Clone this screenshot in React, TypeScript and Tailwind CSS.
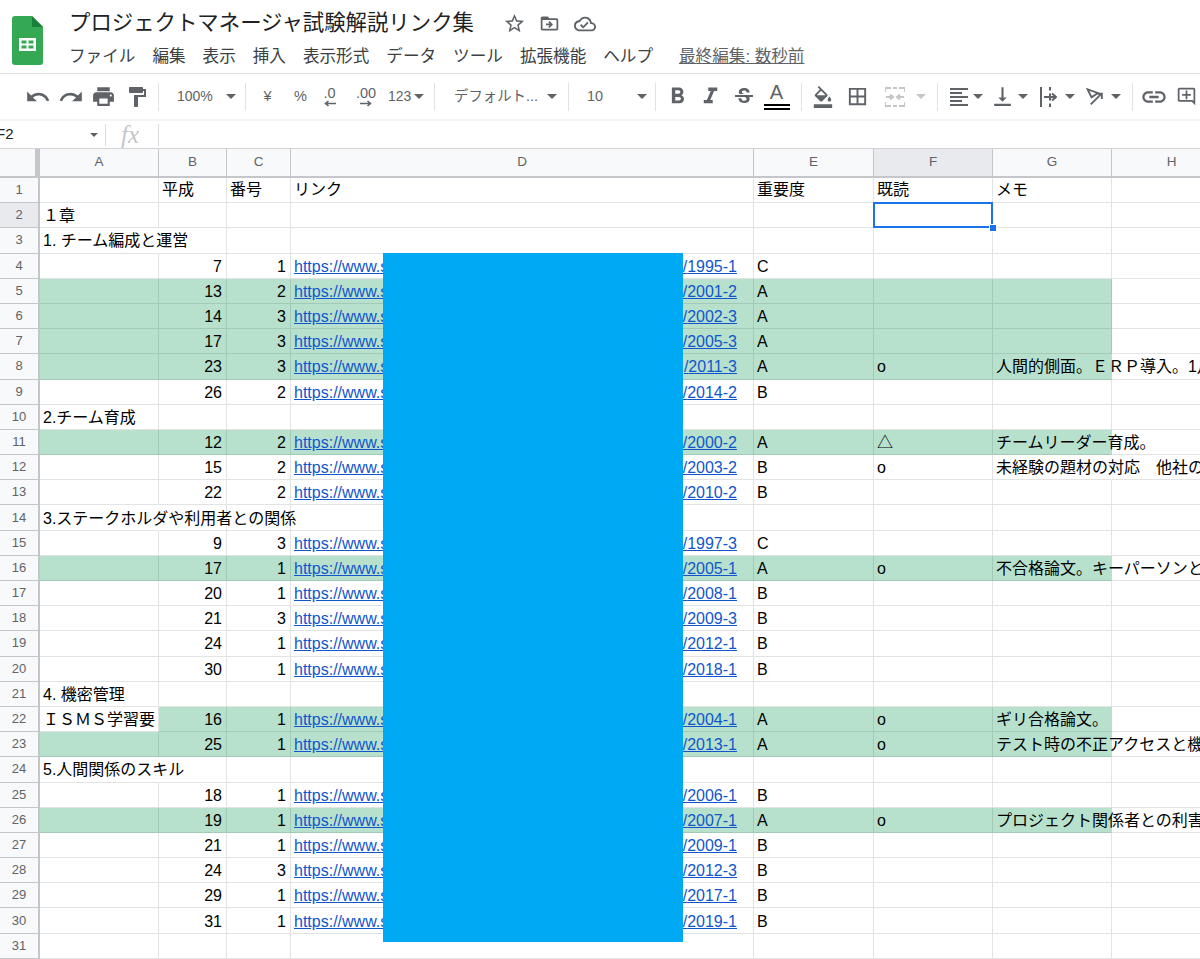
import React from "react";
import {
  MdUndo, MdRedo, MdPrint, MdFormatPaint, MdFormatBold, MdFormatItalic, MdStrikethroughS,
  MdFormatColorFill, MdBorderAll, MdFormatAlignLeft, MdVerticalAlignBottom, MdLink, MdOutlineAddComment,
  MdStarBorder, MdDriveFileMoveOutline, MdOutlineCloudDone,
} from "react-icons/md";

const FONT = "[font-family:'Liberation_Sans','Noto_Sans_CJK_JP',sans-serif]";
const COLS = "grid grid-cols-[40px_119px_68px_64px_463px_120px_119px_119px_120px]";

type R = { n: number; b?: number; c?: number; y?: string; e?: string; f?: string; g?: string; green?: boolean; a?: string; span?: boolean };

const rows: R[] = [
  { n: 1 },
  { n: 2, a: "１章" },
  { n: 3, a: "1. チーム編成と運営", span: true },
  { n: 4, b: 7, c: 1, y: "1995-1", e: "C" },
  { n: 5, b: 13, c: 2, y: "2001-2", e: "A", green: true },
  { n: 6, b: 14, c: 3, y: "2002-3", e: "A", green: true },
  { n: 7, b: 17, c: 3, y: "2005-3", e: "A", green: true },
  { n: 8, b: 23, c: 3, y: "2011-3", e: "A", f: "o", g: "人間的側面。ＥＲＰ導入。1月", green: true },
  { n: 9, b: 26, c: 2, y: "2014-2", e: "B" },
  { n: 10, a: "2.チーム育成" },
  { n: 11, b: 12, c: 2, y: "2000-2", e: "A", f: "△", g: "チームリーダー育成。", green: true },
  { n: 12, b: 15, c: 2, y: "2003-2", e: "B", f: "o", g: "未経験の題材の対応　他社の" },
  { n: 13, b: 22, c: 2, y: "2010-2", e: "B" },
  { n: 14, a: "3.ステークホルダや利用者との関係", span: true },
  { n: 15, b: 9, c: 3, y: "1997-3", e: "C" },
  { n: 16, b: 17, c: 1, y: "2005-1", e: "A", f: "o", g: "不合格論文。キーパーソンと", green: true },
  { n: 17, b: 20, c: 1, y: "2008-1", e: "B" },
  { n: 18, b: 21, c: 3, y: "2009-3", e: "B" },
  { n: 19, b: 24, c: 1, y: "2012-1", e: "B" },
  { n: 20, b: 30, c: 1, y: "2018-1", e: "B" },
  { n: 21, a: "4. 機密管理" },
  { n: 22, a: "ＩＳＭＳ学習要", b: 16, c: 1, y: "2004-1", e: "A", f: "o", g: "ギリ合格論文。", green: true },
  { n: 23, b: 25, c: 1, y: "2013-1", e: "A", f: "o", g: "テスト時の不正アクセスと機", green: true },
  { n: 24, a: "5.人間関係のスキル", span: true },
  { n: 25, b: 18, c: 1, y: "2006-1", e: "B" },
  { n: 26, b: 19, c: 1, y: "2007-1", e: "A", f: "o", g: "プロジェクト関係者との利害", green: true },
  { n: 27, b: 21, c: 1, y: "2009-1", e: "B" },
  { n: 28, b: 24, c: 3, y: "2012-3", e: "B" },
  { n: 29, b: 29, c: 1, y: "2017-1", e: "B" },
  { n: 30, b: 31, c: 1, y: "2019-1", e: "B" },
  { n: 31 },
  { n: 32 },
];

function Logo() {
  return (
    <svg width="31" height="50" viewBox="0 0 31 50" className="shrink-0">
      <path d="M3 0H20L31 11V46a3 3 0 0 1-3 3H3a3 3 0 0 1-3-3V3a3 3 0 0 1 3-3Z" fill="#34a853" />
      <path d="M20 0L31 11H20Z" fill="#188038" />
      <path d="M7 22H24V35H7Z M9.5 24.5V27.5H14.5V24.5Z M16.5 24.5V27.5H21.5V24.5Z M9.5 29.5V32.5H14.5V29.5Z M16.5 29.5V32.5H21.5V29.5Z" fill="#fff" fillRule="evenodd" />
    </svg>
  );
}

function Caret({ className = "", light = false }: { className?: string; light?: boolean }) {
  return (
    <span
      className={`h-0 w-0 shrink-0 border-x-[5px] border-t-[5px] border-x-transparent ${light ? "border-t-[#c4c6c9]" : "border-t-[#5f6368]"} ${className}`}
    />
  );
}

function Sep({ className = "" }: { className?: string }) {
  return <span className={`h-[28px] w-px shrink-0 bg-[#e0e2e4] ${className}`} />;
}

const ib = "flex h-[33px] w-[33px] shrink-0 items-center justify-center text-[#5f6368]";

function Toolbar() {
  return (
    <div className="flex h-[45px] shrink-0 items-center pl-[21px] text-[#5f6368]">
      <span className={ib}><MdUndo size={26} /></span>
      <span className={ib}><MdRedo size={26} /></span>
      <span className={ib}><MdPrint size={25} /></span>
      <span className={ib}><MdFormatPaint size={24} /></span>
      <Sep className="ml-[5px]" />
      <span className="ml-[18px] w-[36px] shrink-0 text-[14px]">100%</span>
      <Caret className="ml-[13px]" />
      <Sep className="ml-[9px]" />
      <span className="ml-[5px] flex w-[33px] shrink-0 justify-center text-[14.5px]">¥</span>
      <span className="flex w-[33px] shrink-0 justify-center text-[14.5px]">%</span>
      <span className="flex w-[25px] shrink-0 flex-col items-center text-[14.5px] leading-[14px]">
        .0
        <svg width="14" height="7" viewBox="0 0 14 7"><path d="M13 3.5H3M5.5 1L2.5 3.5L5.5 6" stroke="#5f6368" strokeWidth="1.6" fill="none" /></svg>
      </span>
      <span className="ml-[12px] flex w-[24px] shrink-0 flex-col items-center text-[14.5px] leading-[14px]">
        .00
        <svg width="14" height="7" viewBox="0 0 14 7"><path d="M1 3.5H11M8.5 1L11.5 3.5L8.5 6" stroke="#5f6368" strokeWidth="1.6" fill="none" /></svg>
      </span>
      <span className="ml-[10px] w-[24px] shrink-0 text-[14px]">123</span>
      <Caret className="ml-[2px]" />
      <Sep className="ml-[10px]" />
      <span className="ml-[19px] w-[80px] shrink-0 whitespace-nowrap text-[14.4px]">デフォルト...</span>
      <Caret className="ml-[13px]" />
      <Sep className="ml-[11px]" />
      <span className="ml-[18px] w-[18px] shrink-0 text-[14.4px]">10</span>
      <Caret className="ml-[32px]" />
      <Sep className="ml-[8px]" />
      <span className={`${ib} ml-[5px]`}><MdFormatBold size={27} /></span>
      <span className={ib}><MdFormatItalic size={27} /></span>
      <span className={ib}><MdStrikethroughS size={24} /></span>
      <span className="flex h-[33px] w-[33px] shrink-0 flex-col items-center justify-start pt-[1px] text-[#5f6368]">
        <span className="text-[20px] leading-[22px]">A</span>
        <span className="mt-[1px] h-[6px] w-[26px] border-y-2 border-black" />
      </span>
      <Sep className="ml-[8px]" />
      <span className={`${ib} ml-[4px]`}><MdFormatColorFill size={22} /></span>
      <span className={`${ib} ml-[2px]`}><MdBorderAll size={23} /></span>
      <span className="ml-[4px] flex h-[33px] w-[33px] shrink-0 items-center justify-center">
        <svg width="20" height="20" viewBox="0 0 20 20" fill="none" stroke="#c4c6c9" strokeWidth="2">
          <path d="M0 5V1H6M8 1H12M14 1H20V5M0 15V19H6M8 19H12M14 19H20V15M1 10H7M5 7.5L8 10L5 12.5M19 10H13M15 7.5L12 10L15 12.5" />
        </svg>
      </span>
      <Caret light className="ml-[5px]" />
      <Sep className="ml-[11px]" />
      <span className={`${ib} ml-[4px]`}><MdFormatAlignLeft size={24} /></span>
      <Caret className="ml-[-2px]" />
      <span className={`${ib} ml-[3px]`}><MdVerticalAlignBottom size={25} /></span>
      <Caret className="ml-[-1px]" />
      <span className="ml-[6px] flex h-[33px] w-[28px] shrink-0 items-center justify-center">
        <svg width="17" height="20" viewBox="0 0 17 20" fill="none" stroke="#5f6368" strokeWidth="2">
          <path d="M1 0V20M10 0V3.5M10 6.5V13.5M10 16.5V20M4 10H15.5M12 6.5L16 10L12 13.5" />
        </svg>
      </span>
      <Caret className="ml-[3px]" />
      <span className="ml-[4px] flex h-[33px] w-[33px] shrink-0 items-center justify-center">
        <svg width="19" height="19" viewBox="0 0 24 22" fill="none" stroke="#5f6368" strokeWidth="2.4">
          <path d="M2 2L15 6.5L7 12ZM6 21L19 8M13.5 7.5H20V14" />
        </svg>
      </span>
      <Caret className="ml-[-1px]" />
      <Sep className="ml-[11px]" />
      <span className={`${ib} ml-[4px]`}><MdLink size={28} /></span>
      <span className={ib}><MdOutlineAddComment size={21} /></span>
    </div>
  );
}

function Cell({ className = "", children }: { className?: string; children?: React.ReactNode }) {
  return <div className={`relative flex min-w-0 items-center whitespace-nowrap border-b border-r ${className}`}>{children}</div>;
}

function Row({ r }: { r: R }) {
  const cellG = r.green ? "bg-[#b7e1cd] border-[#a3cab7]" : "bg-white border-[#e2e3e3]";
  const aCls = r.green && !r.a ? cellG : "bg-white border-[#e2e3e3]";
  const head = r.n === 1;
  const pt = head ? "" : "pt-[2px]";
  return (
    <div className={`${COLS} h-[25.2px] grid-rows-[25.2px] text-[16px] leading-[20px] text-black ${r.n === 2 ? "relative z-20" : ""}`}>
      <div className={`flex items-center justify-center border-b border-r-2 border-[#c4c6c9] text-[13px] text-[#5f6368] ${r.n === 2 ? "bg-[#e8eaed]" : "bg-[#f8f9fa]"}`}>
        {r.n}
      </div>
      <Cell className={`${aCls} ${pt} ${r.span ? "z-10 border-r-transparent" : ""} pl-[3px]`}>
        {r.a}
      </Cell>
      <Cell className={`${cellG} ${pt} justify-end pr-[4px]`}>{head ? <span className="mr-auto pl-[3px]">平成</span> : r.b}</Cell>
      <Cell className={`${cellG} ${pt} justify-end pr-[4px]`}>{head ? <span className="mr-auto pl-[3px]">番号</span> : r.c}</Cell>
      <Cell className={`${cellG} ${pt} justify-between pl-[3px] pr-[16px]`}>
        {head && <span>リンク</span>}
        {r.y && <span className="text-[#1155cc] underline">https://www.sample.example</span>}
        {r.y && <span className="text-[#1155cc] underline">/{r.y}</span>}
      </Cell>
      <Cell className={`${cellG} ${pt} pl-[3px]`}>{head ? "重要度" : r.e}</Cell>
      <Cell className={`${cellG} ${pt} pl-[3px]`}>
        {head ? "既読" : r.f}
        {r.n === 2 && (
          <>
            <span className="absolute -left-px -top-px -bottom-px -right-px border-2 border-[#1a73e8]" />
            <span className="absolute -bottom-[5px] -right-[5px] z-20 h-[8px] w-[8px] border border-white bg-[#1a73e8]" />
          </>
        )}
      </Cell>
      <Cell className={`${cellG} ${pt} ${r.g ? "z-10 border-r-transparent" : ""} pl-[3px]`}>{head ? "メモ" : r.g}</Cell>
      <Cell className="border-[#e2e3e3] bg-white" />
    </div>
  );
}

export default function App() {
  return (
    <div className={`flex h-[959px] w-[1200px] flex-col overflow-hidden bg-white ${FONT}`}>
      <header className="flex h-[74px] shrink-0 border-b border-[#e0e2e4] pl-[12px]">
        <div className="pt-[16px]"><Logo /></div>
        <div className="ml-[26px] flex flex-col">
          <div className="flex h-[45px] items-center pt-[2px]">
            <span className="whitespace-nowrap text-[21.4px] text-[#202124]">プロジェクトマネージャ試験解説リンク集</span>
            <MdStarBorder size={23} className="ml-[29px] text-[#5f6368]" />
            <MdDriveFileMoveOutline size={21} className="ml-[13px] text-[#5f6368]" />
            <MdOutlineCloudDone size={22} className="ml-[14px] text-[#5f6368]" />
          </div>
          <nav className="flex items-center gap-[17px] whitespace-nowrap text-[16.6px] text-[#3c4043]">
            <span>ファイル</span><span>編集</span><span>表示</span><span>挿入</span><span>表示形式</span>
            <span>データ</span><span>ツール</span><span>拡張機能</span><span>ヘルプ</span>
            <span className="ml-[9px] text-[#5f6368] underline">最終編集: 数秒前</span>
          </nav>
        </div>
      </header>
      <Toolbar />
      <div className="flex h-[30px] shrink-0 items-center border-b border-t-2 border-b-[#d0d2d4] border-t-[#f1f3f4]">
        <span className="-ml-[4px] w-[94px] shrink-0 text-[15px] text-[#202124]">F2</span>
        <Caret className="!border-x-[4px] !border-t-[4px]" />
        <span className="ml-[7px] h-[22px] w-px bg-[#dadce0]" />
        <span className="ml-[15px] w-[37px] font-['Liberation_Serif',serif] text-[25px] italic leading-[26px] text-[#c4c6c9]">fx</span>
        <span className="h-[22px] w-px bg-[#dadce0]" />
      </div>
      <main className="relative flex-1 overflow-hidden">
        <div className={`${COLS} h-[29px] border-b-2 border-[#c4c6c9] text-[13.5px] text-[#5f6368]`}>
          <div className="border-r-[5px] border-[#c4c6c9] bg-[#f8f9fa]" />
          {["A", "B", "C", "D", "E", "F", "G", "H"].map((c) => (
            <div key={c} className={`flex items-center justify-center border-r border-[#c4c6c9] ${c === "F" ? "bg-[#e8eaed]" : "bg-[#f8f9fa]"}`}>
              {c}
            </div>
          ))}
        </div>
        {rows.map((r) => <Row key={r.n} r={r} />)}
        <div className="absolute left-[383px] top-[104px] z-30 h-[689px] w-[300px] bg-[#00a9f4]" />
      </main>
    </div>
  );
}
